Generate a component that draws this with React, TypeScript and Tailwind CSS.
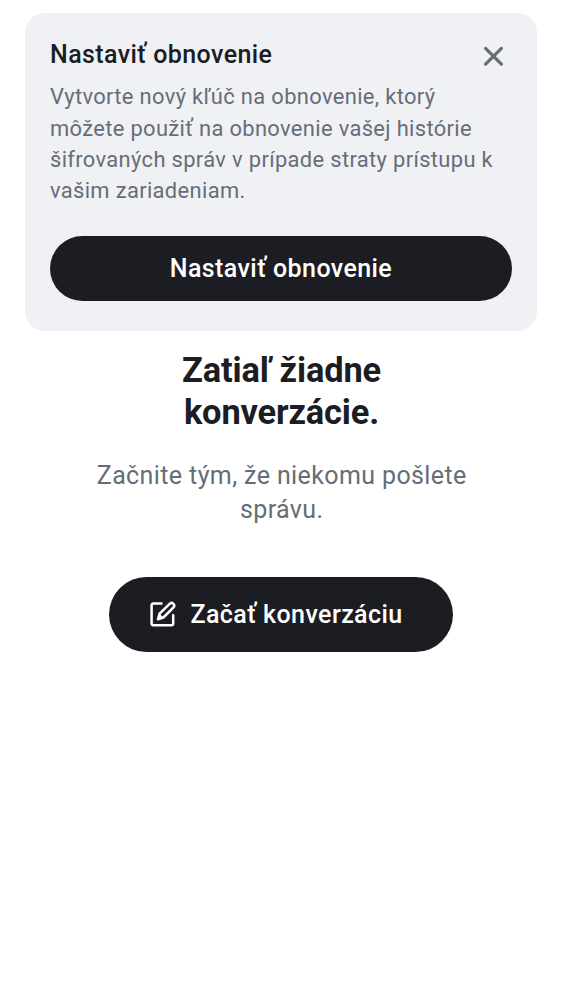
export default function App() {
  return (
    <main className="min-h-screen w-full bg-white px-[25px] pt-[12.5px] font-['Roboto',sans-serif] text-[#1b1d22]">
      <section className="h-[318.5px] rounded-[20px] bg-[#f0f1f5] px-[25px] pt-[25px]">
        <div className="flex items-start justify-between">
          <h2 className="whitespace-nowrap text-[25px] font-medium leading-[34px] tracking-[0.41px]">Nastaviť obnovenie</h2>
          <button aria-label="Zavrieť" className="mt-[6px] mr-[6px] h-[25px] w-[25px] text-[#656d77]">
            <svg viewBox="0 0 24 24" className="h-full w-full" fill="none" stroke="currentColor" strokeWidth="3.1" strokeLinecap="round"><path d="M4.4 4.2 19.6 19.4M19.6 4.2 4.4 19.4" /></svg>
          </button>
        </div>
        <p className="mt-[9.8px] whitespace-nowrap text-[21.9px] leading-[31.25px] tracking-[0.35px] text-[#656d77]">
          Vytvorte nový kľúč na obnovenie, ktorý<br />môžete použiť na obnovenie vašej histórie<br />šifrovaných správ v prípade straty prístupu k<br />vašim zariadeniam.
        </p>
        <button className="mt-[29.7px] h-[65.5px] w-full rounded-full bg-[#1b1d22] text-[25px] font-medium tracking-[0.41px] text-white">Nastaviť obnovenie</button>
      </section>
      <section className="flex flex-col items-center pt-[17.5px] text-center">
        <h1 className="pl-px text-[34.4px] font-bold leading-[42px] tracking-[-0.14px]">Zatiaľ žiadne<br />konverzácie.</h1>
        <p className="mt-[26px] pl-[1.5px] text-[25px] leading-[34.4px] tracking-[0.39px] text-[#656d77]">Začnite tým, že niekomu pošlete<br />správu.</p>
        <button className="mt-[49.5px] flex h-[75px] w-[344px] items-center rounded-full bg-[#1b1d22] pl-[38px] text-[25px] font-medium tracking-[0.41px] text-white">
          <svg viewBox="0 0 31 31" className="mr-[12.5px] h-[31px] w-[31px]" fill="none" stroke="currentColor" strokeWidth="2.5" strokeLinejoin="round" strokeLinecap="round"><path d="M14.5 4.5H6.3a1.7 1.7 0 0 0-1.7 1.7V24.5a1.7 1.7 0 0 0 1.7 1.7H24.5a1.7 1.7 0 0 0 1.7-1.7V16.3" /><path d="m12.6 14.7-1.6 5.5 5.4-1.7L26.5 8.3a2.55 2.55 0 0 0-3.6-3.6z" /><path d="m12.6 14.7-1.6 5.5 5.4-1.7z" fill="currentColor" stroke="none" /></svg>
          Začať konverzáciu
        </button>
      </section>
    </main>
  )
}
